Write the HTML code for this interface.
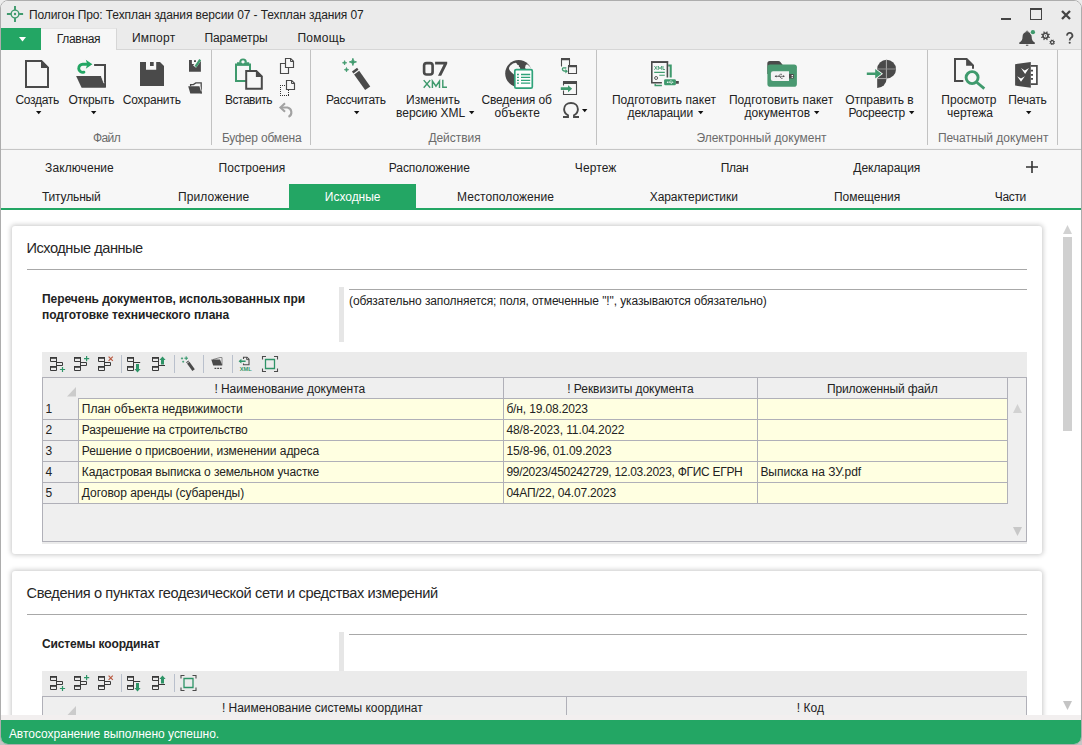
<!DOCTYPE html>
<html><head><meta charset="utf-8"><title>Полигон Про</title>
<style>
html,body{margin:0;padding:0;}
body{width:1082px;height:745px;overflow:hidden;background:linear-gradient(#ececec 0,#ececec 50%,#c6c6c6 51%);font-family:"Liberation Sans",sans-serif;position:relative;}
#win{position:absolute;left:0;top:0;width:1080px;height:743px;border:1px solid #adadad;border-radius:8px;overflow:hidden;background:#fff;}
#in{position:absolute;left:-1px;top:-1px;width:1082px;height:745px;}
.t{position:absolute;white-space:nowrap;line-height:16px;}
.r{position:absolute;}
svg{overflow:visible;}
</style></head><body><div id="win"><div id="in">
<div class="r" style="left:0px;top:0px;width:1082px;height:49px;background:#ebebeb;"></div>
<div class="r" style="left:0px;top:49px;width:1082px;height:1px;background:#d6d6d6;"></div>
<div class="r" style="left:0px;top:50px;width:1082px;height:98px;background:#f7f7f7;"></div>
<div class="r" style="left:0px;top:148px;width:1082px;height:1px;background:#f3f3f3;"></div>
<div class="r" style="left:0px;top:149px;width:1082px;height:1px;background:#c6c6c6;"></div>
<div class="r" style="left:0px;top:150px;width:1082px;height:58px;background:#f7f7f7;"></div>
<div class="r" style="left:0px;top:208px;width:1082px;height:2px;background:#23a664;"></div>
<div class="r" style="left:0px;top:715px;width:1082px;height:5px;background:#f2efef;"></div>
<div class="r" style="left:0px;top:720px;width:1082px;height:25px;background:#23a664;"></div>
<svg class="r" style="left:7px;top:6px" width="16" height="16" viewBox="0 0 16 16"><g stroke="#3f9a6d" fill="none"><circle cx="8" cy="8" r="3.85" stroke-width="1.4"/><path d="M8 -0.1v4M8 12.1v4M-0.1 8h4M12.1 8h4" stroke-width="1.9"/></g><circle cx="8" cy="8" r="1.2" fill="#3f9a6d"/></svg>
<span class="t" style="left:29.00px;top:6.63px;font-size:12px;letter-spacing:-0.101px;color:#222222;">Полигон Про: Техплан здания версии 07 - Техплан здания 07</span>
<div class="r" style="left:1001px;top:17.5px;width:10px;height:2.5px;background:#444;"></div>
<div class="r" style="left:1030px;top:8px;width:12px;height:12px;background:transparent;box-sizing:border-box;border:1px solid #444;border-top-width:2px;"></div>
<svg class="r" style="left:1061px;top:10px" width="10" height="10" viewBox="0 0 10 10"><path d="M1 1L9 9M9 1L1 9" stroke="#444" stroke-width="2.3" fill="none"/></svg>
<div class="r" style="left:1px;top:28px;width:40px;height:22px;background:#23a664;"></div>
<svg class="r" style="left:19px;top:36.5px" width="7" height="4.5" viewBox="0 0 7 4.5"><path d="M0 0H7L3.5 4.5Z" fill="#fff"/></svg>
<div class="r" style="left:41px;top:28px;width:76px;height:22px;background:#f7f7f7;box-sizing:border-box;border-right:1px solid #d6d6d6;border-top:1px solid #e4e4e4;"></div>
<span class="t" style="left:56.80px;top:30.93px;font-size:12px;letter-spacing:-0.312px;color:#222222;">Главная</span>
<span class="t" style="left:131.90px;top:29.73px;font-size:12px;letter-spacing:0.269px;color:#222222;">Импорт</span>
<span class="t" style="left:204.40px;top:29.73px;font-size:12px;letter-spacing:-0.083px;color:#222222;">Параметры</span>
<span class="t" style="left:297.40px;top:29.73px;font-size:12px;letter-spacing:0.290px;color:#222222;">Помощь</span>
<div class="r" style="left:211px;top:50px;width:1px;height:95px;background:#c2c2c2;"></div>
<div class="r" style="left:310px;top:50px;width:1px;height:95px;background:#c2c2c2;"></div>
<div class="r" style="left:596px;top:50px;width:1px;height:95px;background:#c2c2c2;"></div>
<div class="r" style="left:927px;top:50px;width:1px;height:95px;background:#c2c2c2;"></div>
<div class="r" style="left:1057px;top:50px;width:1px;height:95px;background:#c2c2c2;"></div>
<span class="t" style="left:92.90px;top:129.53px;font-size:12px;letter-spacing:-0.567px;color:#6b6b6b;">Файл</span>
<span class="t" style="left:221.90px;top:129.53px;font-size:12px;letter-spacing:-0.167px;color:#6b6b6b;">Буфер обмена</span>
<span class="t" style="left:428.40px;top:129.53px;font-size:12px;letter-spacing:-0.039px;color:#6b6b6b;">Действия</span>
<span class="t" style="left:696.40px;top:129.53px;font-size:12px;letter-spacing:0.009px;color:#6b6b6b;">Электронный документ</span>
<span class="t" style="left:937.90px;top:129.53px;font-size:12px;letter-spacing:0.011px;color:#6b6b6b;">Печатный документ</span>
<span class="t" style="left:15.40px;top:91.83px;font-size:12px;letter-spacing:-0.301px;color:#222222;">Создать</span>
<span class="t" style="left:68.40px;top:91.83px;font-size:12px;letter-spacing:-0.188px;color:#222222;">Открыть</span>
<span class="t" style="left:122.70px;top:91.83px;font-size:12px;letter-spacing:-0.166px;color:#222222;">Сохранить</span>
<span class="t" style="left:225.00px;top:91.83px;font-size:12px;letter-spacing:-0.495px;color:#222222;">Вставить</span>
<span class="t" style="left:326.00px;top:91.83px;font-size:12px;letter-spacing:-0.291px;color:#222222;">Рассчитать</span>
<span class="t" style="left:406.10px;top:91.83px;font-size:12px;letter-spacing:-0.033px;color:#222222;">Изменить</span>
<span class="t" style="left:396.10px;top:104.83px;font-size:12px;letter-spacing:-0.022px;color:#222222;">версию XML</span>
<span class="t" style="left:481.40px;top:91.83px;font-size:12px;letter-spacing:-0.130px;color:#222222;">Сведения об</span>
<span class="t" style="left:494.40px;top:104.83px;font-size:12px;letter-spacing:0.126px;color:#222222;">объекте</span>
<span class="t" style="left:611.90px;top:91.83px;font-size:12px;letter-spacing:0.070px;color:#222222;">Подготовить пакет</span>
<span class="t" style="left:627.60px;top:104.83px;font-size:12px;letter-spacing:-0.085px;color:#222222;">декларации</span>
<span class="t" style="left:728.90px;top:91.83px;font-size:12px;letter-spacing:0.076px;color:#222222;">Подготовить пакет</span>
<span class="t" style="left:744.40px;top:104.83px;font-size:12px;letter-spacing:0.090px;color:#222222;">документов</span>
<span class="t" style="left:845.20px;top:91.83px;font-size:12px;letter-spacing:-0.071px;color:#222222;">Отправить в</span>
<span class="t" style="left:848.50px;top:104.83px;font-size:12px;letter-spacing:-0.205px;color:#222222;">Росреестр</span>
<span class="t" style="left:941.30px;top:91.83px;font-size:12px;letter-spacing:0.042px;color:#222222;">Просмотр</span>
<span class="t" style="left:947.10px;top:104.83px;font-size:12px;letter-spacing:-0.006px;color:#222222;">чертежа</span>
<span class="t" style="left:1008.30px;top:91.83px;font-size:12px;letter-spacing:-0.182px;color:#222222;">Печать</span>
<svg class="r" style="left:35.8px;top:110.9px" width="5.4" height="3.2" viewBox="0 0 5.4 3.2"><path d="M0 0H5.4L2.7 3.2Z" fill="#111"/></svg>
<svg class="r" style="left:90.8px;top:110.9px" width="5.4" height="3.2" viewBox="0 0 5.4 3.2"><path d="M0 0H5.4L2.7 3.2Z" fill="#111"/></svg>
<svg class="r" style="left:354.0px;top:110.9px" width="5.4" height="3.2" viewBox="0 0 5.4 3.2"><path d="M0 0H5.4L2.7 3.2Z" fill="#111"/></svg>
<svg class="r" style="left:1025.6px;top:110.9px" width="5.4" height="3.2" viewBox="0 0 5.4 3.2"><path d="M0 0H5.4L2.7 3.2Z" fill="#111"/></svg>
<svg class="r" style="left:468.90000000000003px;top:111.10000000000001px" width="5.4" height="3.2" viewBox="0 0 5.4 3.2"><path d="M0 0H5.4L2.7 3.2Z" fill="#111"/></svg>
<svg class="r" style="left:698.3px;top:111.10000000000001px" width="5.4" height="3.2" viewBox="0 0 5.4 3.2"><path d="M0 0H5.4L2.7 3.2Z" fill="#111"/></svg>
<svg class="r" style="left:813.8px;top:111.10000000000001px" width="5.4" height="3.2" viewBox="0 0 5.4 3.2"><path d="M0 0H5.4L2.7 3.2Z" fill="#111"/></svg>
<svg class="r" style="left:909.1999999999999px;top:111.10000000000001px" width="5.4" height="3.2" viewBox="0 0 5.4 3.2"><path d="M0 0H5.4L2.7 3.2Z" fill="#111"/></svg>
<svg class="r" style="left:582.0px;top:108.9px" width="5.4" height="3.2" viewBox="0 0 5.4 3.2"><path d="M0 0H5.4L2.7 3.2Z" fill="#111"/></svg>
<span class="t" style="left:45.10px;top:160.03px;font-size:12px;letter-spacing:0.081px;color:#222222;">Заключение</span>
<span class="t" style="left:218.60px;top:160.03px;font-size:12px;letter-spacing:-0.005px;color:#222222;">Построения</span>
<span class="t" style="left:388.70px;top:160.03px;font-size:12px;letter-spacing:-0.033px;color:#222222;">Расположение</span>
<span class="t" style="left:574.80px;top:160.03px;font-size:12px;letter-spacing:0.098px;color:#222222;">Чертеж</span>
<span class="t" style="left:720.80px;top:160.03px;font-size:12px;letter-spacing:-0.376px;color:#222222;">План</span>
<span class="t" style="left:853.30px;top:160.03px;font-size:12px;letter-spacing:-0.031px;color:#222222;">Декларация</span>
<svg class="r" style="left:1026px;top:161px" width="12" height="12" viewBox="0 0 12 12"><path d="M6 0V12M0 6H12" stroke="#333" stroke-width="1.6" fill="none"/></svg>
<div class="r" style="left:289px;top:184px;width:127px;height:24px;background:#23a664;"></div>
<span class="t" style="left:41.90px;top:189.23px;font-size:12px;letter-spacing:-0.148px;color:#222222;">Титульный</span>
<span class="t" style="left:177.90px;top:189.23px;font-size:12px;letter-spacing:0.113px;color:#222222;">Приложение</span>
<span class="t" style="left:324.80px;top:189.23px;font-size:12px;letter-spacing:-0.018px;color:#fff;">Исходные</span>
<span class="t" style="left:457.10px;top:189.23px;font-size:12px;letter-spacing:0.052px;color:#222222;">Местоположение</span>
<span class="t" style="left:649.70px;top:189.23px;font-size:12px;letter-spacing:-0.060px;color:#222222;">Характеристики</span>
<span class="t" style="left:833.90px;top:189.23px;font-size:12px;letter-spacing:-0.008px;color:#222222;">Помещения</span>
<span class="t" style="left:994.80px;top:189.23px;font-size:12px;letter-spacing:-0.343px;color:#222222;">Части</span>
<div class="r" style="left:0;top:210px;width:1082px;height:505px;overflow:hidden;background:#fff;"><div class="r" style="left:0;top:-210px;width:1082px;height:745px;">
<div class="r" style="left:12px;top:226px;width:1030px;height:328px;background:#fff;box-shadow:0 0 5px 1px rgba(0,0,0,.22);border-radius:3px;"></div>
<div class="r" style="left:12px;top:571px;width:1030px;height:300px;background:#fff;box-shadow:0 0 5px 1px rgba(0,0,0,.22);border-radius:3px;"></div>
<svg class="r" style="left:1063px;top:225px" width="9" height="9" viewBox="0 0 9 9"><path d="M4.5 0L9 9H0Z" fill="#d2d2d2"/></svg>
<div class="r" style="left:1063px;top:237px;width:9px;height:194px;background:#d0d0d0;"></div>
<svg class="r" style="left:1063px;top:701px" width="9" height="9" viewBox="0 0 9 9"><path d="M0 0H9L4.5 9Z" fill="#c4c4c4"/></svg>
<span class="t" style="left:26.50px;top:240.17px;font-size:14.6px;letter-spacing:-0.472px;color:#262626;">Исходные данные</span>
<div class="r" style="left:27px;top:269px;width:1000px;height:1px;background:#a8a8a8;"></div>
<span class="t" style="left:42.00px;top:290.93px;font-size:12px;letter-spacing:-0.044px;color:#222222;font-weight:bold;">Перечень документов, использованных при</span>
<span class="t" style="left:42.00px;top:306.83px;font-size:12px;letter-spacing:-0.041px;color:#222222;font-weight:bold;">подготовке технического плана</span>
<div class="r" style="left:339px;top:287px;width:5px;height:55px;background:#e6e6e6;"></div>
<div class="r" style="left:349px;top:289px;width:678px;height:1px;background:#a8a8a8;"></div>
<span class="t" style="left:349.00px;top:293.03px;font-size:12px;letter-spacing:-0.102px;color:#222222;">(обязательно заполняется; поля, отмеченные "!", указываются обязательно)</span>
<div class="r" style="left:42px;top:352px;width:985px;height:192px;background:#ebebeb;"></div>
<div class="r" style="left:42px;top:377px;width:985px;height:165px;background:#efefef;box-sizing:border-box;border:1px solid #b0b0b8;"></div>
<div class="r" style="left:79px;top:399px;width:928px;height:104px;background:#ffffe1;"></div>
<div class="r" style="left:78px;top:398px;width:930px;height:1px;background:#b0b0b8;"></div>
<div class="r" style="left:43px;top:419px;width:965px;height:1px;background:#b0b0b8;"></div>
<div class="r" style="left:43px;top:440px;width:965px;height:1px;background:#b0b0b8;"></div>
<div class="r" style="left:43px;top:461px;width:965px;height:1px;background:#b0b0b8;"></div>
<div class="r" style="left:43px;top:482px;width:965px;height:1px;background:#b0b0b8;"></div>
<div class="r" style="left:43px;top:503px;width:965px;height:1px;background:#b0b0b8;"></div>
<div class="r" style="left:78px;top:398px;width:1px;height:106px;background:#b0b0b8;"></div>
<div class="r" style="left:503px;top:378px;width:1px;height:126px;background:#b0b0b8;"></div>
<div class="r" style="left:757px;top:378px;width:1px;height:126px;background:#b0b0b8;"></div>
<div class="r" style="left:1007px;top:378px;width:1px;height:126px;background:#b0b0b8;"></div>
<svg class="r" style="left:66.5px;top:386.5px" width="9" height="9.5" viewBox="0 0 9 9.5"><path d="M9 0V9.5H0Z" fill="#cbcbcb"/></svg>
<span class="t" style="left:214.40px;top:381.23px;font-size:12px;letter-spacing:-0.039px;color:#222222;">! Наименование документа</span>
<span class="t" style="left:567.30px;top:381.23px;font-size:12px;letter-spacing:-0.051px;color:#222222;">! Реквизиты документа</span>
<span class="t" style="left:826.90px;top:381.23px;font-size:12px;letter-spacing:-0.116px;color:#222222;">Приложенный файл</span>
<span class="t" style="left:45.40px;top:401.23px;font-size:12px;letter-spacing:-0.874px;color:#222222;">1</span>
<span class="t" style="left:81.80px;top:401.23px;font-size:12px;letter-spacing:-0.017px;color:#222222;">План объекта недвижимости</span>
<span class="t" style="left:506.40px;top:401.23px;font-size:12px;letter-spacing:-0.140px;color:#222222;">б/н, 19.08.2023</span>
<span class="t" style="left:45.40px;top:422.23px;font-size:12px;letter-spacing:-0.874px;color:#222222;">2</span>
<span class="t" style="left:81.80px;top:422.23px;font-size:12px;letter-spacing:-0.162px;color:#222222;">Разрешение на строительство</span>
<span class="t" style="left:506.40px;top:422.23px;font-size:12px;letter-spacing:-0.089px;color:#222222;">48/8-2023, 11.04.2022</span>
<span class="t" style="left:45.40px;top:443.23px;font-size:12px;letter-spacing:-0.874px;color:#222222;">3</span>
<span class="t" style="left:81.80px;top:443.23px;font-size:12px;letter-spacing:-0.056px;color:#222222;">Решение о присвоении, изменении адреса</span>
<span class="t" style="left:506.40px;top:443.23px;font-size:12px;letter-spacing:-0.118px;color:#222222;">15/8-96, 01.09.2023</span>
<span class="t" style="left:45.40px;top:464.23px;font-size:12px;letter-spacing:-0.874px;color:#222222;">4</span>
<span class="t" style="left:81.80px;top:464.23px;font-size:12px;letter-spacing:-0.117px;color:#222222;">Кадастровая выписка о земельном участке</span>
<span class="t" style="left:506.40px;top:464.23px;font-size:12px;letter-spacing:-0.287px;color:#222222;">99/2023/450242729, 12.03.2023, ФГИС ЕГРН</span>
<span class="t" style="left:760.40px;top:464.23px;font-size:12px;letter-spacing:-0.022px;color:#222222;">Выписка на ЗУ.pdf</span>
<span class="t" style="left:45.40px;top:485.23px;font-size:12px;letter-spacing:-0.874px;color:#222222;">5</span>
<span class="t" style="left:81.80px;top:485.23px;font-size:12px;letter-spacing:-0.034px;color:#222222;">Договор аренды (субаренды)</span>
<span class="t" style="left:506.40px;top:485.23px;font-size:12px;letter-spacing:-0.192px;color:#222222;">04АП/22, 04.07.2023</span>
<svg class="r" style="left:1013px;top:404px" width="9" height="9" viewBox="0 0 9 9"><path d="M4.5 0L9 9H0Z" fill="#d2d2d2"/></svg>
<svg class="r" style="left:1013px;top:527px" width="9" height="9" viewBox="0 0 9 9"><path d="M0 0H9L4.5 9Z" fill="#c8c8c8"/></svg>
<svg class="r" style="left:0;top:350px" width="300" height="30" viewBox="0 350 300 30"><path d="M50.5 357.5H56.5V361.5H50.5Z" fill="none" stroke="#3a3a3a" stroke-width="1" /><path d="M50 357.9H57" fill="none" stroke="#3a3a3a" stroke-width="1.8" /><path d="M56.5 362.5H62.5V365.5H56.5" fill="none" stroke="#3a3a3a" stroke-width="1" /><path d="M56.5 361V367" fill="none" stroke="#3a3a3a" stroke-width="1" /><path d="M50.5 366.5H56.5V370.5H50.5Z" fill="none" stroke="#3a3a3a" stroke-width="1" /><path d="M50 366.9H57" fill="none" stroke="#3a3a3a" stroke-width="1.8" /><path d="M59.9 369.5H65.1M62.5 366.9V372.1" fill="none" stroke="#2e9467" stroke-width="1.2" /><path d="M74.5 357.5H80.5V361.5H74.5Z" fill="none" stroke="#3a3a3a" stroke-width="1" /><path d="M74 357.9H81" fill="none" stroke="#3a3a3a" stroke-width="1.8" /><path d="M80.5 362.5H86.5V365.5H80.5" fill="none" stroke="#3a3a3a" stroke-width="1" /><path d="M80.5 361V367" fill="none" stroke="#3a3a3a" stroke-width="1" /><path d="M74.5 366.5H80.5V370.5H74.5Z" fill="none" stroke="#3a3a3a" stroke-width="1" /><path d="M74 366.9H81" fill="none" stroke="#3a3a3a" stroke-width="1.8" /><path d="M84.0 358.6H89.19999999999999M86.6 356.0V361.20000000000005" fill="none" stroke="#2e9467" stroke-width="1.2" /><path d="M98.5 357.5H104.5V361.5H98.5Z" fill="none" stroke="#3a3a3a" stroke-width="1" /><path d="M98 357.9H105" fill="none" stroke="#3a3a3a" stroke-width="1.8" /><path d="M104.5 362.5H110.5V365.5H104.5" fill="none" stroke="#3a3a3a" stroke-width="1" /><path d="M104.5 361V367" fill="none" stroke="#3a3a3a" stroke-width="1" /><path d="M98.5 366.5H104.5V370.5H98.5Z" fill="none" stroke="#3a3a3a" stroke-width="1" /><path d="M98 366.9H105" fill="none" stroke="#3a3a3a" stroke-width="1.8" /><path d="M108.6 356.6L112.8 360.8M112.8 356.6L108.6 360.8" fill="none" stroke="#b8583f" stroke-width="1.2" /><path d="M121.5 355V373" fill="none" stroke="#b9c0cc" stroke-width="1" /><path d="M127.5 357.5H133.5V361.5H127.5Z" fill="none" stroke="#3a3a3a" stroke-width="1" /><path d="M127 357.9H134" fill="none" stroke="#3a3a3a" stroke-width="1.8" /><path d="M127.5 366.5H133.5V370.5H127.5Z" fill="none" stroke="#3a3a3a" stroke-width="1" /><path d="M127 366.9H134" fill="none" stroke="#3a3a3a" stroke-width="1.8" /><path d="M133.5 361V366.5M134 362.5H140.2" fill="none" stroke="#3a3a3a" stroke-width="1" /><path d="M136 364H139V369H140.6L137.5 372.4L134.4 369H136Z" fill="#2e9467" /><path d="M152.5 357.5H158.5V361.5H152.5Z" fill="none" stroke="#3a3a3a" stroke-width="1" /><path d="M152 357.9H159" fill="none" stroke="#3a3a3a" stroke-width="1.8" /><path d="M152.5 366.5H158.5V370.5H152.5Z" fill="none" stroke="#3a3a3a" stroke-width="1" /><path d="M152 366.9H159" fill="none" stroke="#3a3a3a" stroke-width="1.8" /><path d="M158.5 361V366.5M159 365.5H165" fill="none" stroke="#3a3a3a" stroke-width="1" /><path d="M161 364.4H164V360H165.6L162.5 356.5L159.4 360H161Z" fill="#2e9467" /><path d="M174.5 355V373" fill="none" stroke="#b9c0cc" stroke-width="1" /><path d="M187.3 361.3L193.6 370.2" fill="none" stroke="#4a4a4a" stroke-width="3" /><path d="M185.6 364.2L190.6 360.6" fill="none" stroke="#ebebeb" stroke-width="0.8" /><path d="M186.2 356.4V360M184.4 358.2H188" fill="none" stroke="#2e9467" stroke-width="1" /><path d="M182 357.3V359.5M180.9 358.4H183.1M183.2 360.7V362.7M182.2 361.7H184.2" fill="none" stroke="#2e9467" stroke-width="0.8" /><path d="M203.5 355V373" fill="none" stroke="#b9c0cc" stroke-width="1" /><path d="M213 359.5L220 357.5H222V365" fill="none" stroke="#8a8a8a" stroke-width="1" /><path d="M211.3 359.5H220L222.4 365.6H213.2Z" fill="#4a4a4a" /><path d="M214.5 368.3H216.3M217.2 368.3H219M219.9 368.3H221.7" fill="none" stroke="#4a4a4a" stroke-width="1.2" /><path d="M232.5 355V373" fill="none" stroke="#b9c0cc" stroke-width="1" /><path d="M243.5 359V357.2H247L249 359.2V364.8H243.5V363.4" fill="none" stroke="#4a4a4a" stroke-width="1.1" /><path d="M246.6 357.2V359.6H249" fill="none" stroke="#4a4a4a" stroke-width="0.9" /><path d="M238.6 361.2L241.4 358.8V360.4H245.6V362H241.4V363.6Z" fill="#2e9467" /><text x="239.8" y="370.9" font-family="Liberation Sans" font-weight="bold" font-size="4.6" fill="#2e9467" textLength="12" lengthAdjust="spacingAndGlyphs">XML</text><path d="M265.5 359.5H274.5V368.5H265.5Z" fill="none" stroke="#2e9467" stroke-width="1.3" /><path d="M262.5 359.5V356.5H266M274 356.5H277.5V359.5M277.5 368.5V371.5H274M266 371.5H262.5V368.5" fill="none" stroke="#4a4a4a" stroke-width="1.1" /></svg>
<span class="t" style="left:26.50px;top:585.17px;font-size:14.6px;letter-spacing:-0.368px;color:#262626;">Сведения о пунктах геодезической сети и средствах измерений</span>
<div class="r" style="left:27px;top:614px;width:1000px;height:1px;background:#a8a8a8;"></div>
<span class="t" style="left:42.00px;top:636.33px;font-size:12px;letter-spacing:-0.125px;color:#222222;font-weight:bold;">Системы координат</span>
<div class="r" style="left:339px;top:632px;width:5px;height:40px;background:#e6e6e6;"></div>
<div class="r" style="left:349px;top:634px;width:678px;height:1px;background:#a8a8a8;"></div>
<div class="r" style="left:42px;top:671px;width:985px;height:60px;background:#ebebeb;"></div>
<div class="r" style="left:42px;top:696px;width:985px;height:60px;background:#efefef;box-sizing:border-box;border:1px solid #b0b0b8;"></div>
<div class="r" style="left:566px;top:697px;width:1px;height:40px;background:#b0b0b8;"></div>
<svg class="r" style="left:66.5px;top:705.5px" width="9" height="9.5" viewBox="0 0 9 9.5"><path d="M9 0V9.5H0Z" fill="#cbcbcb"/></svg>
<span class="t" style="left:221.90px;top:700.23px;font-size:12px;letter-spacing:-0.023px;color:#222222;">! Наименование системы координат</span>
<span class="t" style="left:796.70px;top:700.23px;font-size:12px;letter-spacing:0.057px;color:#222222;">! Код</span>
<svg class="r" style="left:0;top:669px" width="300" height="30" viewBox="0 350 300 30"><path d="M50.5 357.5H56.5V361.5H50.5Z" fill="none" stroke="#3a3a3a" stroke-width="1" /><path d="M50 357.9H57" fill="none" stroke="#3a3a3a" stroke-width="1.8" /><path d="M56.5 362.5H62.5V365.5H56.5" fill="none" stroke="#3a3a3a" stroke-width="1" /><path d="M56.5 361V367" fill="none" stroke="#3a3a3a" stroke-width="1" /><path d="M50.5 366.5H56.5V370.5H50.5Z" fill="none" stroke="#3a3a3a" stroke-width="1" /><path d="M50 366.9H57" fill="none" stroke="#3a3a3a" stroke-width="1.8" /><path d="M59.9 369.5H65.1M62.5 366.9V372.1" fill="none" stroke="#2e9467" stroke-width="1.2" /><path d="M74.5 357.5H80.5V361.5H74.5Z" fill="none" stroke="#3a3a3a" stroke-width="1" /><path d="M74 357.9H81" fill="none" stroke="#3a3a3a" stroke-width="1.8" /><path d="M80.5 362.5H86.5V365.5H80.5" fill="none" stroke="#3a3a3a" stroke-width="1" /><path d="M80.5 361V367" fill="none" stroke="#3a3a3a" stroke-width="1" /><path d="M74.5 366.5H80.5V370.5H74.5Z" fill="none" stroke="#3a3a3a" stroke-width="1" /><path d="M74 366.9H81" fill="none" stroke="#3a3a3a" stroke-width="1.8" /><path d="M84.0 358.6H89.19999999999999M86.6 356.0V361.20000000000005" fill="none" stroke="#2e9467" stroke-width="1.2" /><path d="M98.5 357.5H104.5V361.5H98.5Z" fill="none" stroke="#3a3a3a" stroke-width="1" /><path d="M98 357.9H105" fill="none" stroke="#3a3a3a" stroke-width="1.8" /><path d="M104.5 362.5H110.5V365.5H104.5" fill="none" stroke="#3a3a3a" stroke-width="1" /><path d="M104.5 361V367" fill="none" stroke="#3a3a3a" stroke-width="1" /><path d="M98.5 366.5H104.5V370.5H98.5Z" fill="none" stroke="#3a3a3a" stroke-width="1" /><path d="M98 366.9H105" fill="none" stroke="#3a3a3a" stroke-width="1.8" /><path d="M108.6 356.6L112.8 360.8M112.8 356.6L108.6 360.8" fill="none" stroke="#b8583f" stroke-width="1.2" /><path d="M121.5 355V373" fill="none" stroke="#b9c0cc" stroke-width="1" /><path d="M127.5 357.5H133.5V361.5H127.5Z" fill="none" stroke="#3a3a3a" stroke-width="1" /><path d="M127 357.9H134" fill="none" stroke="#3a3a3a" stroke-width="1.8" /><path d="M127.5 366.5H133.5V370.5H127.5Z" fill="none" stroke="#3a3a3a" stroke-width="1" /><path d="M127 366.9H134" fill="none" stroke="#3a3a3a" stroke-width="1.8" /><path d="M133.5 361V366.5M134 362.5H140.2" fill="none" stroke="#3a3a3a" stroke-width="1" /><path d="M136 364H139V369H140.6L137.5 372.4L134.4 369H136Z" fill="#2e9467" /><path d="M152.5 357.5H158.5V361.5H152.5Z" fill="none" stroke="#3a3a3a" stroke-width="1" /><path d="M152 357.9H159" fill="none" stroke="#3a3a3a" stroke-width="1.8" /><path d="M152.5 366.5H158.5V370.5H152.5Z" fill="none" stroke="#3a3a3a" stroke-width="1" /><path d="M152 366.9H159" fill="none" stroke="#3a3a3a" stroke-width="1.8" /><path d="M158.5 361V366.5M159 365.5H165" fill="none" stroke="#3a3a3a" stroke-width="1" /><path d="M161 364.4H164V360H165.6L162.5 356.5L159.4 360H161Z" fill="#2e9467" /><path d="M174.5 355V373" fill="none" stroke="#b9c0cc" stroke-width="1" /><path d="M184.0 359.5H193.0V368.5H184.0Z" fill="none" stroke="#2e9467" stroke-width="1.3" /><path d="M181.0 359.5V356.5H184.5M192.5 356.5H196.0V359.5M196.0 368.5V371.5H192.5M184.5 371.5H181.0V368.5" fill="none" stroke="#4a4a4a" stroke-width="1.1" /></svg>
</div></div>
<span class="t" style="left:8.90px;top:725.63px;font-size:12px;letter-spacing:-0.020px;color:#fff;">Автосохранение выполнено успешно.</span>
<svg class="r" style="left:0;top:0" width="1082" height="150" viewBox="0 0 1082 150"><path d="M26 61H41.4L48 67.6V87H26Z" fill="#f7f7f7" stroke="#4a4a4a" stroke-width="2" stroke-linejoin="miter"/><path d="M41 60.5V68H48.6Z" fill="#4a4a4a" /><path d="M94.1 65H105V87" fill="none" stroke="#4a4a4a" stroke-width="2" /><path d="M76.1 76.1H101.1L106 87.8H81.6Z" fill="#4a4a4a" /><path d="M101.4 76.2L104 83.2" fill="none" stroke="#f7f7f7" stroke-width="0.9" /><path d="M83.9 72.2A4.05 4.05 0 1 1 83.3 64.3H88" fill="none" stroke="#23a664" stroke-width="2.9" stroke-linecap="round"/><path d="M85.8 59.8L92.4 64.2L85.8 68.7L87.3 64.2Z" fill="#23a664" /><path d="M140 62H160L164 66V86H140Z" fill="#4a4a4a" /><path d="M146 61.5H156.2V69.7H146Z" fill="#f7f7f7" /><path d="M150 62H153.7V66H150Z" fill="#4a4a4a" /><path d="M189 60H200.9V71.8H189Z" fill="#4a4a4a" /><path d="M191.9 59.5H198V63.9H191.9Z" fill="#f7f7f7" /><path d="M194 60.2H196V62.1H194Z" fill="#4a4a4a" /><path d="M194.6 66.6L199.9 59.2" fill="none" stroke="#f7f7f7" stroke-width="3.6" /><path d="M195.5 66.6L200.2 59.6" fill="none" stroke="#3f9a6d" stroke-width="2.3" /><path d="M190.6 86.2V84.6H193.4L195.8 82.9H201.2V93.4" fill="none" stroke="#4a4a4a" stroke-width="1.3" /><path d="M188.2 86.3H199.6L201.8 93.6H190.3Z" fill="#4a4a4a" /><path d="M199.9 86.3L201.4 91.3" fill="none" stroke="#f7f7f7" stroke-width="0.7" /><path d="M236 64.5H250V81H236Z" fill="none" stroke="#3f9a6d" stroke-width="2" /><path d="M235 63.9H251V65.8H235ZM237 62.2H249.2V64H237Z" fill="#3f9a6d" /><path d="M239.2 62.4A3.85 3.85 0 0 1 246.9 62.4Z" fill="#3f9a6d" /><circle cx="243" cy="61.8" r="1.65" fill="#f7f7f7"/><path d="M246.2 71H256.3L261.8 76.5V88.7H246.2Z" fill="#f7f7f7" stroke="#4a4a4a" stroke-width="2" /><path d="M255.9 70.4V77H262.5Z" fill="#4a4a4a" /><path d="M280.5 63.5H288.5V73.5H280.5Z" fill="#f7f7f7" stroke="#4a4a4a" stroke-width="1.15" /><path d="M285.5 58.5H290.7L293.5 61.3V67.5H285.5Z" fill="#f7f7f7" stroke="#4a4a4a" stroke-width="1.15" /><path d="M290.5 58.5V61.5H293.5" fill="none" stroke="#4a4a4a" stroke-width="1" /><path d="M280 85.5H287M280.5 85V96M280 95.5H289M288.5 90V96" fill="none" stroke="#333" stroke-width="1" stroke-dasharray="1 1"/><path d="M286.5 80.5H291.7L294.5 83.3V89.5H286.5Z" fill="#f7f7f7" stroke="#4a4a4a" stroke-width="1.15" /><path d="M291.5 80.5V83.5H294.5" fill="none" stroke="#4a4a4a" stroke-width="1" /><path d="M280.5 107.5H287.5A5 5 0 0 1 288.5 116.9" fill="none" stroke="#a3a3a3" stroke-width="2.1" /><path d="M285 103.2L280.5 107.5L285 111.8" fill="none" stroke="#a3a3a3" stroke-width="2.1" /><path d="M354.5 69.6L367.7 88.2" fill="none" stroke="#4a4a4a" stroke-width="6.3" /><path d="M352.4 74.9L360.6 69.1" fill="none" stroke="#f7f7f7" stroke-width="1.2" /><path d="M352.9 58.3Q352.9 61.9 356.5 61.9Q352.9 61.9 352.9 65.5Q352.9 61.9 349.29999999999995 61.9Q352.9 61.9 352.9 58.3Z" fill="#3f9a6d" stroke="#3f9a6d" stroke-width="0.9" /><path d="M344.6 60.599999999999994Q344.6 62.8 346.8 62.8Q344.6 62.8 344.6 65.0Q344.6 62.8 342.40000000000003 62.8Q344.6 62.8 344.6 60.599999999999994Z" fill="#3f9a6d" stroke="#3f9a6d" stroke-width="0.7" /><path d="M346.5 67.5Q346.5 69.7 348.7 69.7Q346.5 69.7 346.5 71.9Q346.5 69.7 344.3 69.7Q346.5 69.7 346.5 67.5Z" fill="#3f9a6d" stroke="#3f9a6d" stroke-width="0.7" /><path d="M426.6 63.1H430.1Q432.6 63.1 432.6 65.6V72Q432.6 74.5 430.1 74.5H426.6Q424.1 74.5 424.1 72V65.6Q424.1 63.1 426.6 63.1Z" fill="none" stroke="#4a4a4a" stroke-width="2.65" /><path d="M435.1 61.8H447.2V63.7L441.2 75.8H438L443.6 64.5H435.1Z" fill="#4a4a4a" /><path d="M423.7 80.1L430.2 87.7M430.2 80.1L423.7 87.7M432.4 87.9V81L435.95 86.2L439.5 81V87.9M442.8 79.7V87.2H447" fill="none" stroke="#3f9a6d" stroke-width="1.45" /><circle cx="518.6" cy="73.5" r="13.4" fill="#4a4a4a"/><path d="M510.4 65.4L513 63.6L515.9 62.8L516.7 63.6L517.4 64.8L519.1 65.4L518.8 66.5L520 67.4L520.3 70H514.5V75L511.6 72.4L509.8 70.4L509 69L509.2 67.2Z" fill="#f7f7f7" /><path d="M525.6 65.2L527 64.2L529 65.7L531 68.1L531.6 70H526L525.1 67.4Z" fill="#f7f7f7" /><rect x="514.8" y="69.6" width="17.5" height="18.5" rx="1.4" fill="#fff" stroke="#2fa37a" stroke-width="1.7"/><path d="M517 74.5H518.9" fill="none" stroke="#2fa37a" stroke-width="1.3" /><path d="M521 74.5H530.2" fill="none" stroke="#2fa37a" stroke-width="1.3" /><path d="M517 77.4H518.9" fill="none" stroke="#2fa37a" stroke-width="1.3" /><path d="M521 77.4H530.2" fill="none" stroke="#2fa37a" stroke-width="1.3" /><path d="M517 80.3H518.9" fill="none" stroke="#2fa37a" stroke-width="1.3" /><path d="M521 80.3H530.2" fill="none" stroke="#2fa37a" stroke-width="1.3" /><path d="M517 83.2H518.9" fill="none" stroke="#2fa37a" stroke-width="1.3" /><path d="M521 83.2H530.2" fill="none" stroke="#2fa37a" stroke-width="1.3" /><path d="M561.5 66.6V59.5H569.5V65" fill="none" stroke="#4a4a4a" stroke-width="1.1" /><path d="M561 58H570V60.3H561Z" fill="#4a4a4a" /><path d="M568.5 66.5H576.5V73.5H568.5Z" fill="#f7f7f7" stroke="#4a4a4a" stroke-width="1.1" /><path d="M568 65H577V67.3H568Z" fill="#4a4a4a" /><path d="M566.3 68Q562.2 67.2 562.4 69.4Q562.8 71.4 566.2 71.2" fill="none" stroke="#3f9a6d" stroke-width="1.3" /><path d="M565.4 68.9L567.9 71.2L565.4 73.5Z" fill="#3f9a6d" /><path d="M563.5 90.5V94.5H576.5V82H563.5V85.5" fill="none" stroke="#4a4a4a" stroke-width="1.1" /><path d="M563 81H577V84H563Z" fill="#4a4a4a" /><path d="M560.8 87.3H568V85.2L572.2 88.7L568 92.2V90.1H560.8Z" fill="#3f9a6d" /><path d="M563 117H568V115.3C565 113.5 564.1 111.4 564.1 109.2C564.1 105.4 567.1 103 571 103C574.9 103 577.9 105.4 577.9 109.2C577.9 111.4 577 113.5 574 115.3V117H579" fill="none" stroke="#4a4a4a" stroke-width="1.9" stroke-linejoin="miter"/><path d="M668.2 65.5H670.7V77.5" fill="none" stroke="#3f9a6d" stroke-width="2.1" /><path d="M655.2 83.8V85.5H661.9" fill="none" stroke="#3f9a6d" stroke-width="1.4" /><path d="M661.9 82.8H651.8V62.1H667.4V77.5" fill="none" stroke="#4a4a4a" stroke-width="1.6" /><path d="M651 61.8H668.2" fill="none" stroke="#4a4a4a" stroke-width="1.0" /><path d="M654.4 66L657.2 69.8M657.2 66L654.4 69.8M658.3 69.9V66.2L660 68.9L661.7 66.2V69.9M663 66V69.5H665" fill="none" stroke="#3f9a6d" stroke-width="0.85" /><path d="M654.2 72.4H664.8M659.3 75.3H664.8" fill="none" stroke="#3f9a6d" stroke-width="1.1" /><circle cx="656.1" cy="78" r="1.5" fill="none" stroke="#4a4a4a" stroke-width="0.9"/><rect x="664.1" y="79.2" width="11.8" height="6" rx="1.3" fill="#3f9a6d"/><path d="M675.9 81.1H678.8V83.8H675.9Z" fill="#4a4a4a" /><path d="M667 82.2H673M669.2 82.2L670.6 80.8H671.6M669.9 82.2L671 83.6H672" fill="none" stroke="#fff" stroke-width="0.6" /><path d="M666.6 82.2L668 81.4V83ZM673.6 82.2L672.4 81.5V82.9Z" fill="#fff" /><path d="M767.3 74V63.6Q767.3 61.1 769.8 61.1H778.3Q779.6 61.1 780.6 62.3L782.6 64.7V66H768.4V74Z" fill="#4a4a4a" /><rect x="767.4" y="64.5" width="29.5" height="22.2" rx="2.8" fill="#4a9971"/><path d="M773 71.3H789V81H773Q770.9 81 770.9 78.9V73.4Q770.9 71.3 773 71.3Z" fill="#f3f3f3" /><path d="M789 74.1H793.7V78.5H789Z" fill="#4a4a4a" /><path d="M791.6 74.9H793V75.9H791.6ZM791.6 76.8H793V77.8H791.6Z" fill="#fff" /><path d="M775 76.3H784.3M778.2 76.3L780.3 74.3H782M779.4 76.3L781.2 78.3H782.6" fill="none" stroke="#4a4a4a" stroke-width="0.8" /><path d="M774.6 76.3L776.6 75.2V77.4ZM784.8 76.3L783 75.3V77.3Z" fill="#4a4a4a" /><circle cx="886.6" cy="69.2" r="9.4" fill="#4a4a4a"/><path d="M877.2 69.2H886.6V78.6H877.2Z" fill="#4a4a4a" /><path d="M877.2 78.5H886.6A9.4 9.4 0 0 1 877.2 87.9Z" fill="#4a4a4a" /><path d="M886.4 59.6V78.6" fill="none" stroke="#c6c6c6" stroke-width="0.8" /><path d="M877.2 69H896" fill="none" stroke="#909090" stroke-width="1" /><path d="M877.2 78.6H886.8" fill="none" stroke="#c0c0c0" stroke-width="0.7" /><path d="M874.6 67.6L883 73.8L874.6 80Z" fill="#f7f7f7" /><path d="M866.8 72.4H875.2V69L881.6 73.8L875.2 78.6V75.1H866.8Z" fill="#3f9a6d" /><path d="M963.3 81H955V59H966.6L973 65.4V68.8" fill="none" stroke="#4a4a4a" stroke-width="2" /><path d="M966.1 58.6V65.7H973.4Z" fill="#4a4a4a" /><circle cx="972.1" cy="77.6" r="6" fill="none" stroke="#3f9a6d" stroke-width="2.9"/><path d="M976.4 82L984.3 88.6" fill="none" stroke="#3f9a6d" stroke-width="2.8" /><path d="M1030.8 65.8H1036.9V84.2H1030.8" fill="#fff" stroke="#4a4a4a" stroke-width="1.7" /><path d="M1015.1 64.2L1030.8 62V87.8L1015.1 85.6Z" fill="#4a4a4a" /><path d="M1021 68.1L1024.7 70.5L1029 68.1L1025.1 73.9Z" fill="#fff" /><path d="M1017.2 76.3L1021 78.5L1024.9 76.3L1021 81.8Z" fill="#fff" /><path d="M1030.8 70.7H1033" fill="none" stroke="#4a4a4a" stroke-width="1.7" /><path d="M1030.8 74.8H1033" fill="none" stroke="#4a4a4a" stroke-width="1.7" /><path d="M1030.8 78.9H1033" fill="none" stroke="#4a4a4a" stroke-width="1.7" /><path d="M1022.5 37C1022.5 33.7 1024.5 32.1 1027.1 32.1C1029.7 32.1 1031.7 33.7 1031.7 37C1031.7 39.6 1032.5 41 1034.8 42.6V43.9H1019.3V42.6C1021.7 41 1022.5 39.6 1022.5 37Z" fill="#4a4a4a" /><path d="M1026 32.2A1.1 1.1 0 0 1 1028.2 32.2" fill="none" stroke="#4a4a4a" stroke-width="0.9" /><path d="M1025.9 45.2H1028.3" fill="none" stroke="#4a4a4a" stroke-width="1.1" /><circle cx="1032.9" cy="32.2" r="2.9" fill="#ebebeb"/><circle cx="1032.9" cy="32.2" r="2.15" fill="#3f9a6d"/><path d="M1048.76 36.29L1049.98 37.22L1049.67 37.97L1048.15 37.76L1047.46 38.45L1047.67 39.97L1046.92 40.28L1045.99 39.06L1045.01 39.06L1044.08 40.28L1043.33 39.97L1043.54 38.45L1042.85 37.76L1041.33 37.97L1041.02 37.22L1042.24 36.29L1042.24 35.31L1041.02 34.38L1041.33 33.63L1042.85 33.84L1043.54 33.15L1043.33 31.63L1044.08 31.32L1045.01 32.54L1045.99 32.54L1046.92 31.32L1047.67 31.63L1047.46 33.15L1048.15 33.84L1049.67 33.63L1049.98 34.38L1048.76 35.31ZM1047.20 35.80A1.7 1.7 0 1 0 1043.80 35.80A1.7 1.7 0 1 0 1047.20 35.80Z" fill="#4a4a4a" fill-rule="evenodd"/><circle cx="1045.5" cy="35.8" r="0.6" fill="#4a4a4a"/><path d="M1054.38 42.63L1055.01 43.19L1054.82 43.66L1053.97 43.61L1053.51 44.07L1053.56 44.92L1053.09 45.11L1052.53 44.48L1051.87 44.48L1051.31 45.11L1050.84 44.92L1050.89 44.07L1050.43 43.61L1049.58 43.66L1049.39 43.19L1050.02 42.63L1050.02 41.97L1049.39 41.41L1049.58 40.94L1050.43 40.99L1050.89 40.53L1050.84 39.68L1051.31 39.49L1051.87 40.12L1052.53 40.12L1053.09 39.49L1053.56 39.68L1053.51 40.53L1053.97 40.99L1054.82 40.94L1055.01 41.41L1054.38 41.97ZM1053.15 42.30A0.95 0.95 0 1 0 1051.25 42.30A0.95 0.95 0 1 0 1053.15 42.30Z" fill="#4a4a4a" fill-rule="evenodd"/><path d="M1067.1 35.6A2.65 2.65 0 1 1 1071.1 37.8Q1069.7 38.7 1069.7 40.5" fill="none" stroke="#4a4a4a" stroke-width="1.8" /><circle cx="1069.7" cy="42.8" r="1.05" fill="#4a4a4a"/></svg>
</div></div></body></html>
